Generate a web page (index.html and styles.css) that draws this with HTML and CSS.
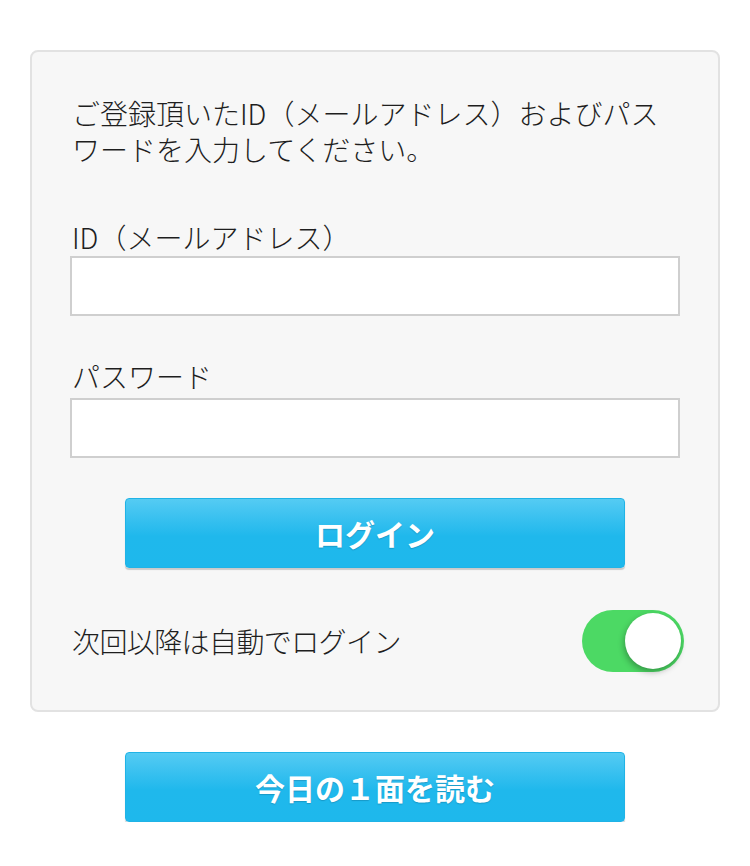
FILE: index.html
```html
<!DOCTYPE html>
<html lang="ja">
<head>
<meta charset="utf-8">
<title>ログイン</title>
<link rel="stylesheet" href="styles.css">
</head>
<body>
<div class="page">
  <form class="card">
    <p class="intro">ご登録頂いたID（メールアドレス）およびパスワードを入力してください。</p>
    <label class="label label-id" for="uid">ID（メールアドレス）</label>
    <input class="field" id="uid" type="text">
    <label class="label label-pw" for="pw">パスワード</label>
    <input class="field" id="pw" type="password">
    <button class="btn btn-login" type="button">ログイン</button>
    <div class="auto-row">
      <span class="auto-text">次回以降は自動でログイン</span>
      <span class="toggle"><span class="knob"></span></span>
    </div>
  </form>
  <button class="btn btn-today" type="button">今日の１面を読む</button>
</div>
</body>
</html>
```
FILE: styles.css
```css
* { box-sizing: border-box; }
html, body { margin: 0; padding: 0; background: #ffffff; }
body {
  font-family: "Noto Sans CJK JP", "Noto Sans", sans-serif;
  font-weight: 300;
  color: #1e1e1e;
}
.page {
  padding: 50px 30px 0 30px;
  display: flex;
  flex-direction: column;
  align-items: center;
}
.card {
  width: 690px;
  background: #f7f7f7;
  border: 2px solid #e2e2e2;
  border-radius: 8px;
  padding: 43px 38px 38px 38px;
  display: flex;
  flex-direction: column;
  margin: 0;
}
.intro {
  margin: 0;
  font-size: 28px;
  line-height: 36px;
  padding-left: 2px;
}
.label {
  display: block;
  font-size: 28px;
  line-height: 36px;
  padding-left: 2px;
  margin-bottom: 1px;
}
.label-id { margin-top: 52px; }
.label-pw { margin-top: 42px; margin-bottom: 4px; }
.field {
  width: 100%;
  height: 60px;
  border: 2px solid #cfcfcf;
  background: #ffffff;
  border-radius: 0;
  padding: 0 12px;
  font-size: 24px;
  outline: none;
}
.btn {
  width: 500px;
  height: 70px;
  border: 1px solid #20b3e6;
  border-radius: 4px;
  background: linear-gradient(to bottom, #55cbf3 0%, #3cc2f0 25%, #1fb8ec 55%, #1eb8ec 100%);
  box-shadow: 0 2px 1px rgba(0, 0, 0, 0.18);
  color: #ffffff;
  font-family: "Noto Sans CJK JP", "Noto Sans", sans-serif;
  font-weight: 700;
  font-size: 30px;
  line-height: 1;
  text-shadow: 0 1px 1px rgba(0, 60, 90, 0.25);
  cursor: pointer;
  padding: 0;
}
.btn-login {
  align-self: center;
  margin-top: 40px;
}
.auto-row {
  margin-top: 42px;
  margin-right: -4px;
  display: flex;
  align-items: center;
  justify-content: space-between;
}
.auto-text {
  font-size: 28px;
  line-height: 36px;
  padding-left: 2px;
  letter-spacing: -0.6px;
}
.toggle {
  position: relative;
  width: 102px;
  height: 62px;
  border-radius: 31px;
  background: #4cd964;
  display: block;
}
.knob {
  position: absolute;
  top: 3px;
  right: 3px;
  width: 56px;
  height: 56px;
  border-radius: 50%;
  background: #ffffff;
  box-shadow: -1px 3px 6px rgba(0, 0, 0, 0.3);
}
.btn-today {
  margin-top: 40px;
}
```
